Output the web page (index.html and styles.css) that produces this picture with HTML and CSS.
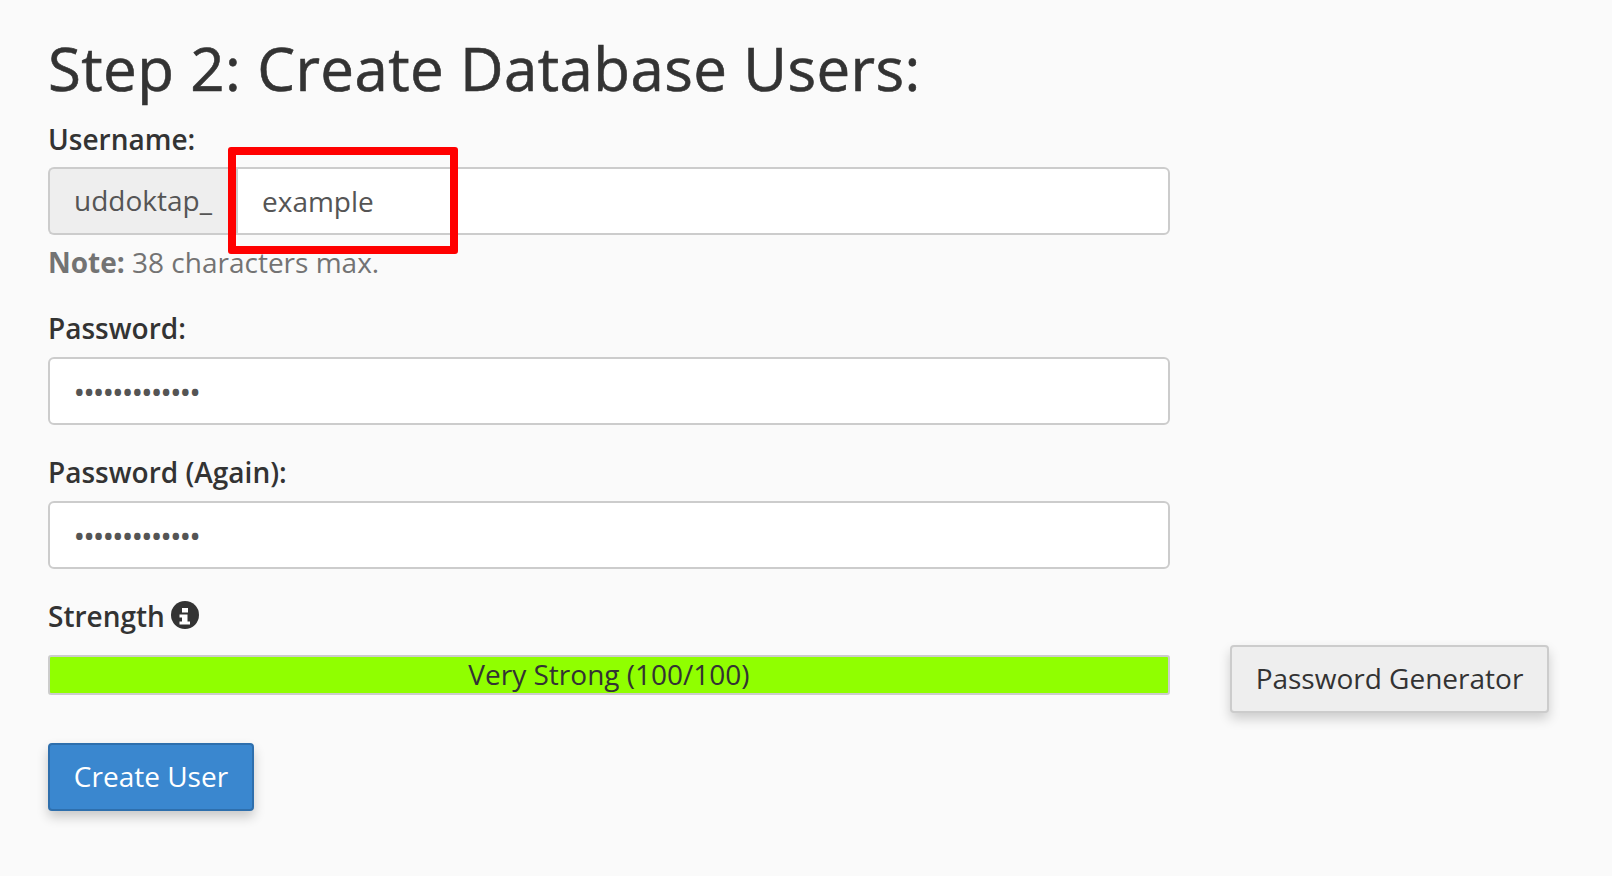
FILE: index.html
```html
<!DOCTYPE html>
<html lang="en">
<head>
    <meta charset="UTF-8">
    <title>Create Database Users</title>
    <link rel="stylesheet" href="styles.css">
</head>
<body>
    <h1 class="title">Step 2: Create Database Users:</h1>

    <form class="user-form">
        <!-- Username -->
        <div class="field field-username">
            <label class="field-label">Username:</label>
            <div class="input-group">
                <span class="input-prefix">uddoktap_</span>
                <div class="input input-joined">example</div>
                <div class="highlight"></div>
            </div>
            <p class="note"><strong>Note:</strong> 38 characters max.</p>
        </div>

        <!-- Passwords -->
        <div class="field field-password">
            <label class="field-label">Password:</label>
            <div class="input input-dots">•••••••••••••</div>
        </div>

        <div class="field field-again">
            <label class="field-label">Password (Again):</label>
            <div class="input input-dots">•••••••••••••</div>
        </div>

        <!-- Strength -->
        <div class="strength-row">
            <div class="strength">
                <div class="field-label strength-label">
                    Strength
                    <svg class="info-icon" viewBox="0 0 28 28" xmlns="http://www.w3.org/2000/svg">
                        <circle cx="14" cy="14" r="14" fill="#333"/>
                        <path d="M11 7h6v4.500h-6z M8.500 13.500h8v7h2.500v3H8.500v-3H11v-4H8.500z" fill="#fff"/>
                    </svg>
                </div>
                <div class="strength-bar">Very Strong (100/100)</div>
            </div>
            <button type="button" class="btn btn-default">Password Generator</button>
        </div>

        <button type="button" class="btn btn-primary">Create User</button>
    </form>
</body>
</html>
```

FILE: styles.css
```css
* {
    margin: 0;
    padding: 0;
    box-sizing: border-box;
}

body {
    height: 100vh;
    background: #fafafa;
    color: #333;
    font-family: 'Open Sans', sans-serif;
    font-size: 28px;
    line-height: 38px;
    padding: 31px 62px 0 48px;
    overflow: hidden;
}

.title {
    font-size: 60px;
    font-weight: 400;
    letter-spacing: 0.41px;
    -webkit-text-stroke: 0.6px #333;
    line-height: 74px;
    margin-bottom: 15px;
}

.field-label {
    display: block;
    font-weight: 600;
    line-height: 38px;
}

/* Fields */
.user-form {
    width: 1502px;
}

.field {
    width: 1122px;
}

.field-username .field-label {
    margin-bottom: 9px;
}

.field-password {
    margin-top: 28px;
}

.field-password .field-label,
.field-again .field-label {
    margin-bottom: 10px;
}

.field-again {
    margin-top: 28px;
}

.input {
    height: 68px;
    background: #fff;
    border: 2px solid #ccc;
    border-radius: 6px;
    color: #555;
    padding: 0 25px;
    line-height: 64px;
    flex: 1;
}

.input-dots {
    font-size: 23px;
    font-weight: 700;
    letter-spacing: 1px;
    line-height: 66px;
}

.input-group {
    position: relative;
    display: flex;
}

.input-prefix {
    width: 188px;
    height: 68px;
    flex: none;
    background: #eee;
    border: 2px solid #ccc;
    border-right: none;
    border-radius: 6px 0 0 6px;
    color: #555;
    padding-left: 24px;
    line-height: 62px;
}

.input-joined {
    border-radius: 0 6px 6px 0;
    padding-left: 24px;
}

/* Red annotation box */
.highlight {
    position: absolute;
    left: 180px;
    top: -20px;
    width: 230px;
    height: 107px;
    border: 8px solid #f00;
    border-radius: 3px;
}

.note {
    color: #737373;
    margin-top: 8px;
    line-height: 38px;
}

/* Strength */
.strength-row {
    display: flex;
    align-items: flex-end;
    gap: 60px;
    margin-top: 28px;
}

.strength {
    width: 1122px;
    margin-bottom: 18px;
}

.strength-label {
    display: flex;
    align-items: center;
    gap: 6px;
    margin-bottom: 20px;
}

.info-icon {
    width: 28px;
    height: 28px;
    margin-top: -2px;
}

.strength-bar {
    height: 40px;
    background: #90ff00;
    border: 2px solid #ccc;
    border-radius: 3px;
    text-align: center;
    line-height: 34px;
}

/* Buttons */
.btn {
    display: block;
    font-family: inherit;
    font-size: 28px;
    border-radius: 4px;
    height: 68px;
    padding-bottom: 3px;
    cursor: pointer;
}

.btn-default {
    width: 319px;
    flex: none;
    background: #eee;
    border: 2px solid #ccc;
    color: #333;
    box-shadow: 0 6px 12px rgba(0, 0, 0, 0.18);
}

.btn-primary {
    width: 206px;
    margin-top: 30px;
    background: #3a87cf;
    border: 2px solid #2e6fad;
    color: #fff;
    box-shadow: 0 6px 12px rgba(0, 0, 0, 0.2);
}
```
